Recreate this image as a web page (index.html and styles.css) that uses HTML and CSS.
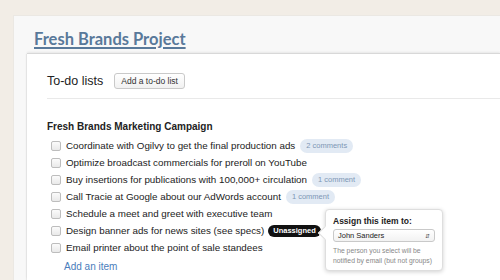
FILE: index.html
```html
<!DOCTYPE html>
<html lang="en">
<head>
    <meta charset="UTF-8">
    <title>Fresh Brands Project</title>
    <link rel="stylesheet" href="styles.css">
</head>
<body>
    <div class="project">
        <div class="project-header">
            <h1><a href="#">Fresh Brands Project</a></h1>
        </div>

        <div class="sheet">
            <div class="sheet-header">
                <h2>To-do lists</h2>
                <button class="btn-small">Add a to-do list</button>
            </div>

            <div class="todolist">
                <h3>Fresh Brands Marketing Campaign</h3>
                <ul class="todos">
                    <li><span class="check"></span>Coordinate with Ogilvy to get the final production ads <span class="comments">2 comments</span></li>
                    <li><span class="check"></span>Optimize broadcast commercials for preroll on YouTube</li>
                    <li><span class="check"></span>Buy insertions for publications with 100,000+ circulation <span class="comments">1 comment</span></li>
                    <li><span class="check"></span>Call Tracie at Google about our AdWords account <span class="comments">1 comment</span></li>
                    <li><span class="check"></span>Schedule a meet and greet with executive team</li>
                    <li class="has-popover">
                        <span class="check"></span>Design banner ads for news sites (see specs) <span class="assignee">Unassigned</span>
                        <div class="popover">
                            <h4>Assign this item to:</h4>
                            <div class="select">
                                <span>John Sanders</span>
                                <span class="arrows">&#8693;</span>
                            </div>
                            <p>The person you select will be notified by email (but not groups)</p>
                        </div>
                    </li>
                    <li><span class="check"></span>Email printer about the point of sale standees</li>
                </ul>
                <a class="add-item" href="#">Add an item</a>
            </div>
        </div>
    </div>
</body>
</html>
```

FILE: styles.css
```css
/* Project page */

:root {
    --paper: #f2ede6;
    --panel: #f8f8f8;
    --ink: #222222;
    --title: #59799a;
    --link: #4a7dbb;
    --pill: #e2eaf4;
    --pill-text: #7d97b4;
}

body {
    margin: 0;
    background: var(--paper);
    font-family: "Liberation Sans", Arial, sans-serif;
    color: var(--ink);
    height: 280px;
    overflow: hidden;
}

/* Outer project panel */
.project {
    display: flex;
    flex-direction: column;
    height: 264px;
    margin: 15px 0 0 13px;
    background: var(--panel);
    border-left: 1px solid #ebe8e3;
    border-top: 1px solid #ebe8e3;
    overflow: hidden;
}

.project-header {
    padding: 13px 0 0 20px;
    height: 25px;
}

.project-header h1 {
    margin: 0;
    font-family: Lato, "Liberation Sans", sans-serif;
    font-size: 16.5px;
    font-weight: 700;
    line-height: 20px;
}

.project-header h1 a {
    color: var(--title);
    text-decoration: underline;
    text-decoration-thickness: 2px;
    text-underline-offset: 2px;
}

/* White sheet */
.sheet {
    flex: 1;
    margin-left: 13px;
    background: #fff;
    box-shadow: 0 -1px 0 #d8d8d8, 0 -2px 2px rgba(0, 0, 0, 0.07), -1px 0 1px rgba(0, 0, 0, 0.06);
    padding: 19px 0 0 20px;
}

.sheet-header {
    display: flex;
    align-items: center;
    gap: 11px;
    padding-bottom: 9px;
    border-bottom: 1px solid #e9e9e9;
}

.sheet-header h2 {
    margin: 0;
    font-size: 12.5px;
    font-weight: 400;
}

.btn-small {
    font-family: inherit;
    font-size: 8.5px;
    color: #333;
    background: linear-gradient(#ffffff, #f1f1f1);
    border: 1px solid #c9c9c9;
    border-radius: 3px;
    padding: 2px 6px;
    height: 16px;
    line-height: 10px;
}

/* To-do list */
.todolist {
    padding-top: 22px;
}

.todolist h3 {
    margin: 0 0 5px 0;
    font-size: 10px;
    font-weight: 700;
}

.todos {
    list-style: none;
    margin: 0;
    padding: 0 0 0 4px;
}

.todos li {
    position: relative;
    display: flex;
    align-items: center;
    height: 17px;
    font-size: 9.8px;
    white-space: nowrap;
}

.check {
    width: 8px;
    height: 8px;
    margin-right: 5px;
    border: 1px solid #bdbdbd;
    border-radius: 2px;
    background: linear-gradient(#fbfbfb, #e9e9e9);
    flex-shrink: 0;
}

.comments {
    margin-left: 5px;
    padding: 1px 6px;
    border-radius: 7px;
    background: var(--pill);
    color: var(--pill-text);
    font-size: 7.5px;
    line-height: 12px;
}

.assignee {
    margin-left: 4px;
    padding: 0 5px;
    border-radius: 6px;
    background: #111;
    color: #fff;
    font-size: 7.5px;
    font-weight: 700;
    line-height: 12px;
}

.add-item {
    display: inline-block;
    margin: -1px 0 0 17px;
    font-size: 10px;
    color: var(--link);
    text-decoration: none;
}

/* Assign popover */
.popover {
    position: absolute;
    left: 274px;
    top: -13px;
    width: 102px;
    padding: 6px 7px 4px 7px;
    background: #fff;
    border: 1px solid #dedede;
    border-radius: 4px;
    box-shadow: 0 1px 4px rgba(0, 0, 0, 0.18);
    white-space: normal;
    z-index: 2;
}

.popover::before {
    content: "";
    position: absolute;
    left: -6px;
    top: 18px;
    width: 9px;
    height: 9px;
    background: #fff;
    border-left: 1px solid #dedede;
    border-bottom: 1px solid #dedede;
    transform: rotate(45deg);
}

.popover h4 {
    margin: 0 0 3px 0;
    font-size: 8.5px;
    font-weight: 700;
}

.select {
    display: flex;
    justify-content: space-between;
    align-items: center;
    height: 11px;
    padding: 0 4px;
    border: 1px solid #c9c9c9;
    border-radius: 3px;
    background: linear-gradient(#ffffff, #f2f2f2);
    font-size: 7.5px;
}

.select .arrows {
    font-size: 6px;
    color: #555;
}

.popover p {
    margin: 4px 0 0 0;
    font-size: 6.8px;
    line-height: 10px;
    color: #888;
}
```
